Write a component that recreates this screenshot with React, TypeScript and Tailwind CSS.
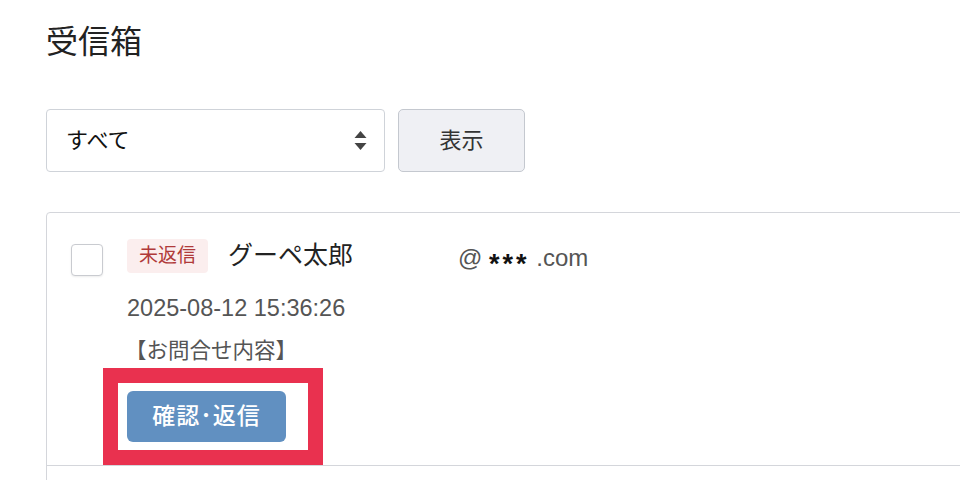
const font = { fontFamily: '"Liberation Sans", "Noto Sans CJK JP", sans-serif' };

const SelectArrows = () => (
  <svg width="13" height="19" viewBox="0 0 13 19" className="text-[#444]">
    <path d="M6.5 0 L12.5 7 L0.5 7 Z" fill="currentColor" />
    <path d="M6.5 19 L12.5 12 L0.5 12 Z" fill="currentColor" />
  </svg>
);

const App = () => (
  <div
    className="w-[960px] h-[480px] overflow-hidden bg-white text-[#222]"
    style={font}
  >
    <div className="pl-[46px]">
      <h1 className="pt-[22px] text-[32px] leading-[40px] font-normal">受信箱</h1>

      {/* Filter */}
      <div className="mt-[47px] flex gap-[13px]">
        <div className="w-[339px] h-[63px] flex items-center justify-between pl-[19px] pr-[17px] border border-[#cfd3d9] rounded-[4px] bg-white">
          <span className="text-[22px] text-[#111]">すべて</span>
          <SelectArrows />
        </div>
        <button className="w-[127px] h-[63px] flex items-center justify-center border border-[#c4c8cf] rounded-[5px] bg-[#eff0f4] text-[22px] text-[#333]">
          表示
        </button>
      </div>

      {/* List */}
      <div className="mt-[40px] w-[960px] border border-[#d4d6db] rounded-[4px]">
        <div className="flex pl-[24px] pt-[26px] pb-[23px] border-b border-[#d4d6db]">
          <div className="mt-[5px] w-[32px] h-[32px] rounded-[4px] border border-[#c9cbd0] bg-white shadow-[0_1px_2px_rgba(0,0,0,0.08)]" />
          <div className="ml-[24px] flex flex-col">
            <div className="flex items-center h-[34px]">
              <span className="h-[34px] px-[12px] flex items-center rounded-[4px] bg-[#fbeeee] text-[#b03a3a] text-[19px]">
                未返信
              </span>
              <span className="ml-[20px] w-[230px] text-[25px] text-[#222]">グーペ太郎</span>
              <span className="text-[24px] text-[#555] mt-[2px]">
                @{' '}
                <span className="inline-block text-[#111] text-[27px] font-bold tracking-[3px] translate-y-[7px]">***</span>
                {' '}.com
              </span>
            </div>
            <div className="mt-[19px] text-[23.5px] leading-[32px] text-[#555]">2025-08-12 15:36:26</div>
            <div className="mt-[13px] text-[21.5px] leading-[28px] text-[#555] -ml-[2px]">【お問合せ内容】</div>
            <div className="mt-[26px] relative w-[159px]">
              <div className="absolute -left-[24px] -top-[23px] -right-[37px] -bottom-[23px] border-[15px] border-[#e9314f]" />
              <button className="relative w-[159px] h-[51px] flex items-center justify-center rounded-[6px] bg-[#6190c1] text-white text-[23px] tracking-[1px] font-medium">
                確認･返信
              </button>
            </div>
          </div>
        </div>
        <div className="h-[40px]" />
      </div>
    </div>
  </div>
);

export default App;
